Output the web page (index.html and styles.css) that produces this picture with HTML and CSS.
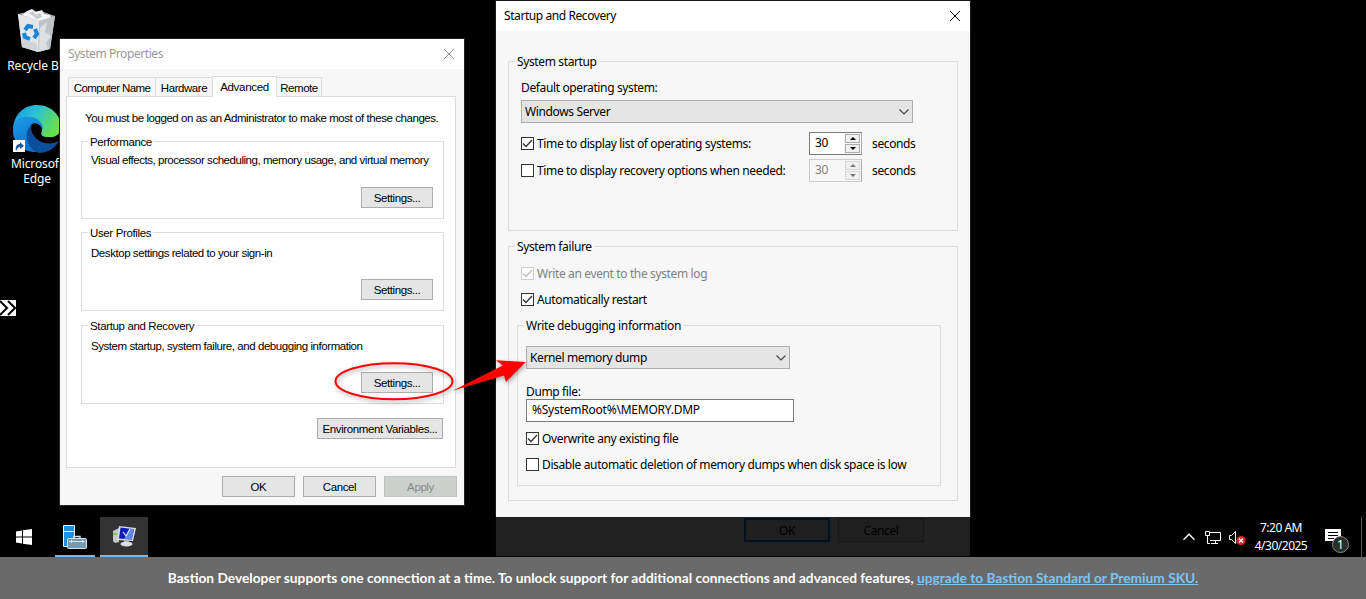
FILE: index.html
```html
<!DOCTYPE html>
<html lang="en">
<head>
    <meta charset="utf-8">
    <title>Bastion</title>
    <link rel="stylesheet" href="styles.css">
</head>
<body>
    <div class="desktop">
        <div class="shortcuts">
            <div class="shortcut recycle">
                <svg width="40" height="46" viewBox="0 0 40 46">
                    <path d="M1 6 L38 8 L33 41 L21 44 L5 39Z" fill="#d5d8da"/>
                    <path d="M1 6 L10 4 L24 3 L38 8 L22 13Z" fill="#9b9fa2"/>
                    <path d="M5 7 L10 3 L15 1 L19 4 L25 2 L27 6 L33 7 L34 10 L22 13Z" fill="#f4f5f6"/>
                    <path d="M12 5 l4 -2 3 4 4 -2 2 4 -5 2z" fill="#c5c9cc"/>
                    <path d="M22 13 L38 8 L33 41 L21 44Z" fill="#bfc3c6"/>
                    <path d="M23 20 l7 -6 -2 10 6 4 -5 7 2 6 -9 2z" fill="#dde0e2"/>
                    <path d="M1 6 L22 13 L21 44 L5 39Z" fill="#e4e6e8"/>
                    <path d="M5 27 l6 6 9 2 v8 L5 39z" fill="#d0d4d7"/>
                    <g fill="none" stroke="#1685dc" stroke-width="4">
                        <path d="M8 22 L11 18 L16 19"/>
                        <path d="M18 21 L20 26 L17 30"/>
                        <path d="M13 31 L8 29 L7 25"/>
                    </g>
                </svg>
                <span>Recycle Bin</span>
            </div>
            <div class="shortcut edge">
                <svg width="50" height="50" viewBox="0 0 50 50">
                    <defs>
                        <linearGradient id="wave" x1="0" y1="0" x2="1" y2="0.4">
                            <stop offset="0" stop-color="#1596dd"/>
                            <stop offset="0.5" stop-color="#2cc2d4"/>
                            <stop offset="1" stop-color="#67e04c"/>
                        </linearGradient>
                        <linearGradient id="swirl" x1="0" y1="0" x2="0.5" y2="1">
                            <stop offset="0" stop-color="#1c9de6"/>
                            <stop offset="1" stop-color="#0c6fce"/>
                        </linearGradient>
                    </defs>
                    <path d="M1 25 C2 10 12 1 25 1 C40 1 49 12 49 23 C49 30 43 34 37 33 C30 33 28 31 30 27 C31 18 22 13 14 14 C8 14 3 19 1 25Z" fill="url(#wave)"/>
                    <path d="M1 25 C3 14 11 12 17 13 C26 13 31 19 31 26 C29 21 24 18 20 20 C13 27 14 40 25 48 C11 49 0 38 1 25Z" fill="url(#swirl)"/>
                    <path d="M20 20 C12 26 12 43 27 49 C36 49 43 44 47 37 C40 41 30 40 25 35 C20 31 18 25 20 20Z" fill="#0b4f9c"/>
                    <rect x="1" y="36" width="12" height="12" fill="#fff"/>
                    <path d="M4 47 C3 42 5 40 8 40 V38 L12 42 L8 45 V43 C6 43 5 45 4 47Z" fill="#2158a5"/>
                </svg>
                <span>Microsoft<br>Edge</span>
            </div>
        </div>

        <div class="expander">
            <svg width="16" height="16" viewBox="0 0 16 16" fill="none" stroke="#000" stroke-width="2">
                <path d="M0 1 L7 8 L0 15 M8 1 L15 8 L8 15"/>
            </svg>
        </div>

        <div class="window properties">
            <div class="titlebar inactive">
                <span>System Properties</span>
                <svg width="12" height="12" viewBox="0 0 12 12" fill="none" stroke="#999"><path d="M1 1 L11 11 M11 1 L1 11"/></svg>
            </div>
            <div class="tabs">
                <div class="tab name">Computer Name</div>
                <div class="tab hardware">Hardware</div>
                <div class="tab advanced">Advanced</div>
                <div class="tab remote">Remote</div>
            </div>
            <div class="panel">
                <p class="note">You must be logged on as an Administrator to make most of these changes.</p>
                <fieldset class="first">
                    <legend>Performance</legend>
                    <p>Visual effects, processor scheduling, memory usage, and virtual memory</p>
                    <button>Settings...</button>
                </fieldset>
                <fieldset>
                    <legend>User Profiles</legend>
                    <p>Desktop settings related to your sign-in</p>
                    <button>Settings...</button>
                </fieldset>
                <fieldset>
                    <legend>Startup and Recovery</legend>
                    <p>System startup, system failure, and debugging information</p>
                    <button>Settings...</button>
                </fieldset>
                <button class="environment">Environment Variables...</button>
            </div>
            <div class="actions">
                <button>OK</button>
                <button>Cancel</button>
                <button class="disabled">Apply</button>
            </div>
        </div>

        <div class="window recovery">
            <div class="titlebar">
                <span>Startup and Recovery</span>
                <svg width="12" height="12" viewBox="0 0 12 12" fill="none" stroke="#000"><path d="M1 1 L11 11 M11 1 L1 11"/></svg>
            </div>
            <fieldset class="startup">
                <legend>System startup</legend>
                <div class="label">Default operating system:</div>
                <div class="combo system">
                    <span>Windows Server</span>
                    <svg width="10" height="6" viewBox="0 0 10 6" fill="none" stroke="#444" stroke-width="1.2"><path d="M0.5 0.5 L5 5 L9.5 0.5"/></svg>
                </div>
                <div class="timer">
                    <div class="check">
                        <svg class="box" viewBox="0 0 11 11"><path d="M1 5.5 L4 8.5 L10 2"/></svg>
                        <span>Time to display list of operating systems:</span>
                    </div>
                    <div class="spinner">
                        <span>30</span>
                        <div class="arrows"><i class="up"></i><i class="down"></i></div>
                    </div>
                    <span class="seconds">seconds</span>
                </div>
                <div class="timer">
                    <div class="check">
                        <svg class="box" viewBox="0 0 11 11"></svg>
                        <span>Time to display recovery options when needed:</span>
                    </div>
                    <div class="spinner off">
                        <span>30</span>
                        <div class="arrows"><i class="up"></i><i class="down"></i></div>
                    </div>
                    <span class="seconds">seconds</span>
                </div>
            </fieldset>
            <fieldset class="failure">
                <legend>System failure</legend>
                <div class="check off">
                    <svg class="box" viewBox="0 0 11 11"><path d="M1 5.5 L4 8.5 L10 2"/></svg>
                    <span>Write an event to the system log</span>
                </div>
                <div class="check">
                    <svg class="box" viewBox="0 0 11 11"><path d="M1 5.5 L4 8.5 L10 2"/></svg>
                    <span>Automatically restart</span>
                </div>
                <fieldset class="debugging">
                    <legend>Write debugging information</legend>
                    <div class="combo dump">
                        <span>Kernel memory dump</span>
                        <svg width="10" height="6" viewBox="0 0 10 6" fill="none" stroke="#444" stroke-width="1.2"><path d="M0.5 0.5 L5 5 L9.5 0.5"/></svg>
                    </div>
                    <div class="label">Dump file:</div>
                    <div class="field">%SystemRoot%\MEMORY.DMP</div>
                    <div class="check">
                        <svg class="box" viewBox="0 0 11 11"><path d="M1 5.5 L4 8.5 L10 2"/></svg>
                        <span>Overwrite any existing file</span>
                    </div>
                    <div class="check">
                        <svg class="box" viewBox="0 0 11 11"></svg>
                        <span>Disable automatic deletion of memory dumps when disk space is low</span>
                    </div>
                </fieldset>
            </fieldset>
            <div class="actions">
                <button class="default">OK</button>
                <button>Cancel</button>
            </div>
        </div>

        <svg class="annotation" width="200" height="60" viewBox="330 350 200 60">
            <ellipse cx="394" cy="381.3" rx="58.5" ry="18" fill="none" stroke="#f00" stroke-width="2"/>
            <path d="M452.5 390.8 L502.7 365.5 L496 360.3 L525.7 362 L506 382 L504 375.5Z" fill="#f00"/>
        </svg>

        <div class="taskbar">
            <div class="start">
                <svg width="16" height="16" viewBox="0 0 16 16" fill="#fff">
                    <path d="M0 2.4 L6 1.5 V7.5 H0Z M7 1.3 L16 0 V7.5 H7Z M0 8.5 H6 V14.4 L0 13.6Z M7 8.5 H16 V16 L7 14.7Z"/>
                </svg>
            </div>
            <div class="task">
                <svg width="26" height="26" viewBox="0 0 26 26">
                    <path d="M1.5 1.5 H12.5 V22.5 H1.5Z" fill="#1f8fe0" stroke="#eaf4fb"/>
                    <path d="M2 7.5 H12" stroke="#eaf4fb"/>
                    <path d="M12 14 V12.5 H18 V14" fill="none" stroke="#d5e2e8" stroke-width="1.4"/>
                    <rect x="5.5" y="14.5" width="19" height="10" rx="1" fill="#7599ae" stroke="#d5e2e8"/>
                    <path d="M7 17.5 H23 M9.5 16 V19 M20.5 16 V19" stroke="#d5e2e8"/>
                </svg>
            </div>
            <div class="task active">
                <svg width="24" height="24" viewBox="0 0 24 24">
                    <path d="M1 7 L7 4 V18 L3 19 L1 17Z" fill="#c3c7c5"/>
                    <rect x="1" y="9" width="4" height="2" fill="#7ac943"/>
                    <path d="M7 2 L24 4 L21 17 L5 16Z" fill="#d9dcdf"/>
                    <path d="M8.500 3.500 L22 5.200 L19.800 15.500 L7 14.500Z" fill="#1018b8"/>
                    <path d="M18 4.700 L22 5.200 L19.800 15.500 L12 14.900Z" fill="#5f86ea"/>
                    <path d="M11 8 L14 12 L18 5" fill="none" stroke="#e8ecff" stroke-width="1.200"/>
                    <path d="M12 16 H17 V19 H12Z" fill="#a9adb0"/>
                    <ellipse cx="14.500" cy="20" rx="6" ry="2.500" fill="#dcdee0"/>
                </svg>
            </div>
            <div class="tray">
                <svg class="chevron" width="12" height="8" viewBox="0 0 12 8" fill="none" stroke="#fff" stroke-width="1.300"><path d="M0.500 6.800 L6 1.200 L11.500 6.800"/></svg>
                <svg class="network" width="17" height="14" viewBox="0 0 17 14" fill="none" stroke="#fff">
                    <path d="M5 1.500 H15.500 V9.500 H5 M0.500 0.500 H4.500 V4.500 H0.500Z M2.500 5 V12.500 H5 M10.500 10 V12.500 M6 12.500 H13"/>
                </svg>
                <svg class="volume" width="17" height="17" viewBox="0 0 17 17">
                    <path d="M0.500 5.500 H2.500 L6.500 1.500 V13.500 L2.500 9.500 H0.500Z" fill="none" stroke="#fff"/>
                    <circle cx="12" cy="10.500" r="4.600" fill="#e0252f"/>
                    <path d="M10 8.500 L14 12.500 M14 8.500 L10 12.500" stroke="#fff" stroke-width="1.300"/>
                </svg>
                <div class="clock">7:20 AM<br>4/30/2025</div>
                <div class="notice">
                    <svg width="17" height="17" viewBox="0 0 17 17">
                        <path d="M0 0 H16 V12 H11 L8 15 V12 H0Z" fill="#fff"/>
                        <path d="M3 3.500 H13 M3 6.500 H13 M3 9.500 H9" stroke="#000"/>
                    </svg>
                    <span class="badge">1</span>
                </div>
                <div class="peek"></div>
            </div>
        </div>
    </div>
    <div class="banner">
        <span>Bastion Developer supports one connection at a time. To unlock support for additional connections and advanced features, <a href="#">upgrade to Bastion Standard or Premium SKU.</a></span>
    </div>
</body>
</html>
```
FILE: styles.css
```css
* {
    box-sizing: border-box;
}
body {
    margin: 0;
    width: 1366px;
    height: 599px;
    overflow: hidden;
    background: #000;
    font: 12px/16px "Noto Sans", sans-serif;
    color: #000;
}
p {
    margin: 0;
}
svg {
    display: block;
    flex: none;
}
.desktop {
    position: relative;
    height: 557px;
    overflow: hidden;
}

/* desktop icons */
.shortcuts {
    width: 74px;
    padding-top: 8px;
    color: #fff;
    line-height: 15px;
    letter-spacing: -0.15px;
    text-align: center;
    white-space: nowrap;
}
.shortcut {
    display: flex;
    flex-direction: column;
    align-items: center;
}
.recycle {
    height: 96px;
    gap: 4px;
}
.recycle span {
    padding-left: 2px;
}
.edge {
    gap: 2px;
}
.expander {
    position: absolute;
    top: 300px;
    left: 0;
    width: 16px;
    height: 16px;
    background: #fff;
}

/* windows */
.window {
    position: absolute;
    background: #f7f7f7;
    white-space: nowrap;
}
.properties {
    top: 39px;
    left: 60px;
    width: 404px;
    height: 466px;
    box-shadow: 0 0 0 1px #222;
    font-family: "Liberation Sans", sans-serif;
    font-size: 11.5px;
    letter-spacing: -0.44px;
}
.recovery {
    top: 1px;
    left: 496px;
    width: 474px;
    height: 555px;
    box-shadow: 0 0 0 1px #1a1a1a;
    letter-spacing: -0.37px;
}
.titlebar {
    display: flex;
    align-items: center;
    justify-content: space-between;
    height: 30px;
    padding: 0 9px 0 8px;
    background: #fff;
    font-family: "Noto Sans", sans-serif;
    font-size: 12px;
    letter-spacing: -0.42px;
}
.inactive {
    color: #999;
}
fieldset {
    display: flex;
    flex-direction: column;
    align-items: flex-start;
    margin: 0;
    padding: 0;
    min-width: 0;
    border: 1px solid #dcdcdc;
}
legend {
    height: 15px;
    margin-left: 6px;
    padding: 0 2px;
    line-height: 15px;
}
button {
    height: 21px;
    padding: 0;
    border: 1px solid #adadad;
    background: #e5e5e5;
    color: #000;
    font: inherit;
    letter-spacing: inherit;
    line-height: 19px;
}

/* System Properties */
.tabs {
    display: flex;
    align-items: flex-end;
    height: 20px;
    margin: 7px 0 0 8px;
}
.tab {
    height: 19px;
    padding-top: 2px;
    border: 1px solid #dcdcdc;
    border-bottom: 0;
    text-align: center;
}
.name {
    width: 88px;
    letter-spacing: -0.6px;
}
.hardware {
    width: 58px;
    margin-left: -1px;
}
.advanced {
    position: relative;
    z-index: 1;
    width: 65px;
    height: 21px;
    margin: 0 0 -1px -1px;
    background: #fff;
    letter-spacing: -0.3px;
}
.remote {
    width: 46px;
    margin-left: -1px;
}
.panel {
    display: flex;
    flex-direction: column;
    width: 390px;
    height: 372px;
    margin-left: 6px;
    padding: 13px 12px 0 14px;
    border: 1px solid #dcdcdc;
    background: #fff;
}
.note {
    margin: 0 0 8px 4px;
}
.panel fieldset {
    width: 363px;
    height: 86px;
    margin-bottom: 7px;
}
.panel fieldset p {
    margin: 5px 0 0 9px;
}
.panel legend {
    padding-top: 1px;
    letter-spacing: -0.36px;
}
.panel fieldset button {
    width: 72px;
    margin: 18px 10px 0 0;
    align-self: flex-end;
}
.properties button {
    padding-top: 1px;
    letter-spacing: -0.4px;
}
.panel .first {
    height: 85px;
    margin-bottom: 6px;
}
.panel .first p {
    margin-top: 3px;
    letter-spacing: -0.46px;
}
.panel .first button {
    margin-top: 19px;
}
.environment {
    width: 126px;
    margin: 7px 0 0;
    align-self: flex-end;
}
.actions {
    display: flex;
    gap: 8px;
}
.properties .actions {
    margin: 8px 0 0 162px;
}
.properties .actions button {
    width: 73px;
}
.properties .actions .disabled {
    background: #ccd1cd;
    border-color: #bfc3c0;
    color: #888;
}

/* Startup and Recovery */
.startup {
    width: 450px;
    height: 177px;
    margin: 23px 0 0 12px;
}
.startup > div {
    margin-left: 12px;
}
.startup .label {
    margin-top: 11px;
}
.combo {
    display: flex;
    align-items: center;
    justify-content: space-between;
    height: 23px;
    padding: 0 3px;
    border: 1px solid #adadad;
    background: #e5e5e5;
}
.system {
    width: 392px;
    margin-top: 4px;
}
.timer {
    display: flex;
    align-items: center;
    margin-top: 4px;
}
.system + .timer {
    margin-top: 9px;
}
.timer .check {
    width: 288px;
}
.check {
    display: flex;
    align-items: center;
    gap: 3px;
    height: 15px;
}
.box {
    width: 13px;
    height: 13px;
    border: 1px solid #333;
    background: #fff;
    fill: none;
    stroke: #333;
    stroke-width: 1.3;
}
.check.off {
    color: #808080;
}
.off .box {
    border-color: #ccc;
    stroke: #bbb;
}
.spinner {
    display: flex;
    width: 53px;
    height: 23px;
    border: 1px solid #7a7a7a;
    border-right-color: #aaa;
    background: #fff;
}
.spinner span {
    width: 34px;
    padding: 2px 0 0 5px;
}
.arrows {
    display: flex;
    flex-direction: column;
    gap: 1px;
    width: 17px;
    padding: 1px;
    background: #f7f7f7;
}
.arrows i {
    display: flex;
    align-items: center;
    justify-content: center;
    height: 9px;
    border: 1px solid #adadad;
    background: #f0f0f0;
}
.arrows i::before {
    content: "";
    border: 3px solid transparent;
    border-top-width: 0;
    border-bottom-color: #000;
}
.arrows .down::before {
    border: 3px solid transparent;
    border-bottom-width: 0;
    border-top-color: #000;
}
.spinner.off {
    border-color: #ccc #aaa #ccc #ccc;
    background: #f7f7f7;
    color: #808080;
}
.off .arrows i {
    border-color: #d5d8d5;
}
.off .up::before {
    border-bottom-color: #777;
}
.off .arrows .down::before {
    border-top-color: #777;
}
.seconds {
    margin-left: 10px;
}
.failure {
    width: 450px;
    height: 262px;
    margin: 8px 0 0 12px;
}
.failure > .check {
    margin: 11px 0 0 12px;
}
.failure > .check.off {
    margin-top: 12px;
}
.debugging {
    width: 424px;
    height: 168px;
    margin: 11px 0 0 8px;
}
.debugging > div {
    margin-left: 8px;
}
.dump {
    width: 264px;
    margin-top: 13px;
}
.debugging .label {
    height: 15px;
    margin-top: 15px;
}
.field {
    width: 268px;
    height: 23px;
    padding: 2px 5px;
    border: 1px solid #7a7a7a;
    background: #fff;
    letter-spacing: -0.22px;
}
.debugging .check {
    margin-top: 11px;
}
.debugging .field + .check {
    margin-top: 9px;
}
.recovery .actions {
    margin: 17px 0 0 248px;
}
.recovery .actions button {
    width: 86px;
    height: 24px;
}
.recovery .actions .default {
    border: 2px solid #0078d7;
}

.annotation {
    position: absolute;
    top: 350px;
    left: 330px;
    filter: drop-shadow(1px 2px 2px rgba(0, 0, 0, 0.35));
}

/* taskbar */
.taskbar {
    position: absolute;
    left: 0;
    right: 0;
    bottom: 0;
    display: flex;
    height: 40px;
    background: rgba(0, 0, 0, 0.865);
    color: #fff;
}
.start {
    width: 55px;
    padding: 12px 16px;
}
.task {
    width: 40px;
    height: 40px;
    margin-right: 5px;
    padding: 7px 0 0 7px;
    border-bottom: 2px solid #76b9ed;
}
.active {
    width: 48px;
    padding: 7px 0 0 12px;
    background: #333;
}
.tray {
    display: flex;
    align-items: flex-start;
    margin-left: auto;
}
.chevron {
    margin: 16px 10px 0 0;
}
.network {
    margin: 14px 7px 0 0;
}
.volume {
    margin-top: 13px;
}
.clock {
    width: 70px;
    padding-top: 2px;
    line-height: 18px;
    letter-spacing: -0.5px;
    text-align: center;
}
.notice {
    position: relative;
    width: 45px;
    padding: 12px 0 0 9px;
}
.badge {
    position: absolute;
    top: 19px;
    left: 16px;
    width: 17px;
    height: 17px;
    border: 1px solid #888;
    border-radius: 50%;
    background: #2b2b2b;
    font-size: 12px;
    line-height: 15px;
    text-align: center;
}
.peek {
    width: 5px;
    height: 40px;
    border-left: 1px solid #555;
}

.banner {
    height: 42px;
    background: #6a6a6a;
    color: #fff;
    font: bold 13.72px/42px Lato, sans-serif;
    text-align: center;
    white-space: nowrap;
}
.banner a {
    color: #7cc4f5;
}
```
